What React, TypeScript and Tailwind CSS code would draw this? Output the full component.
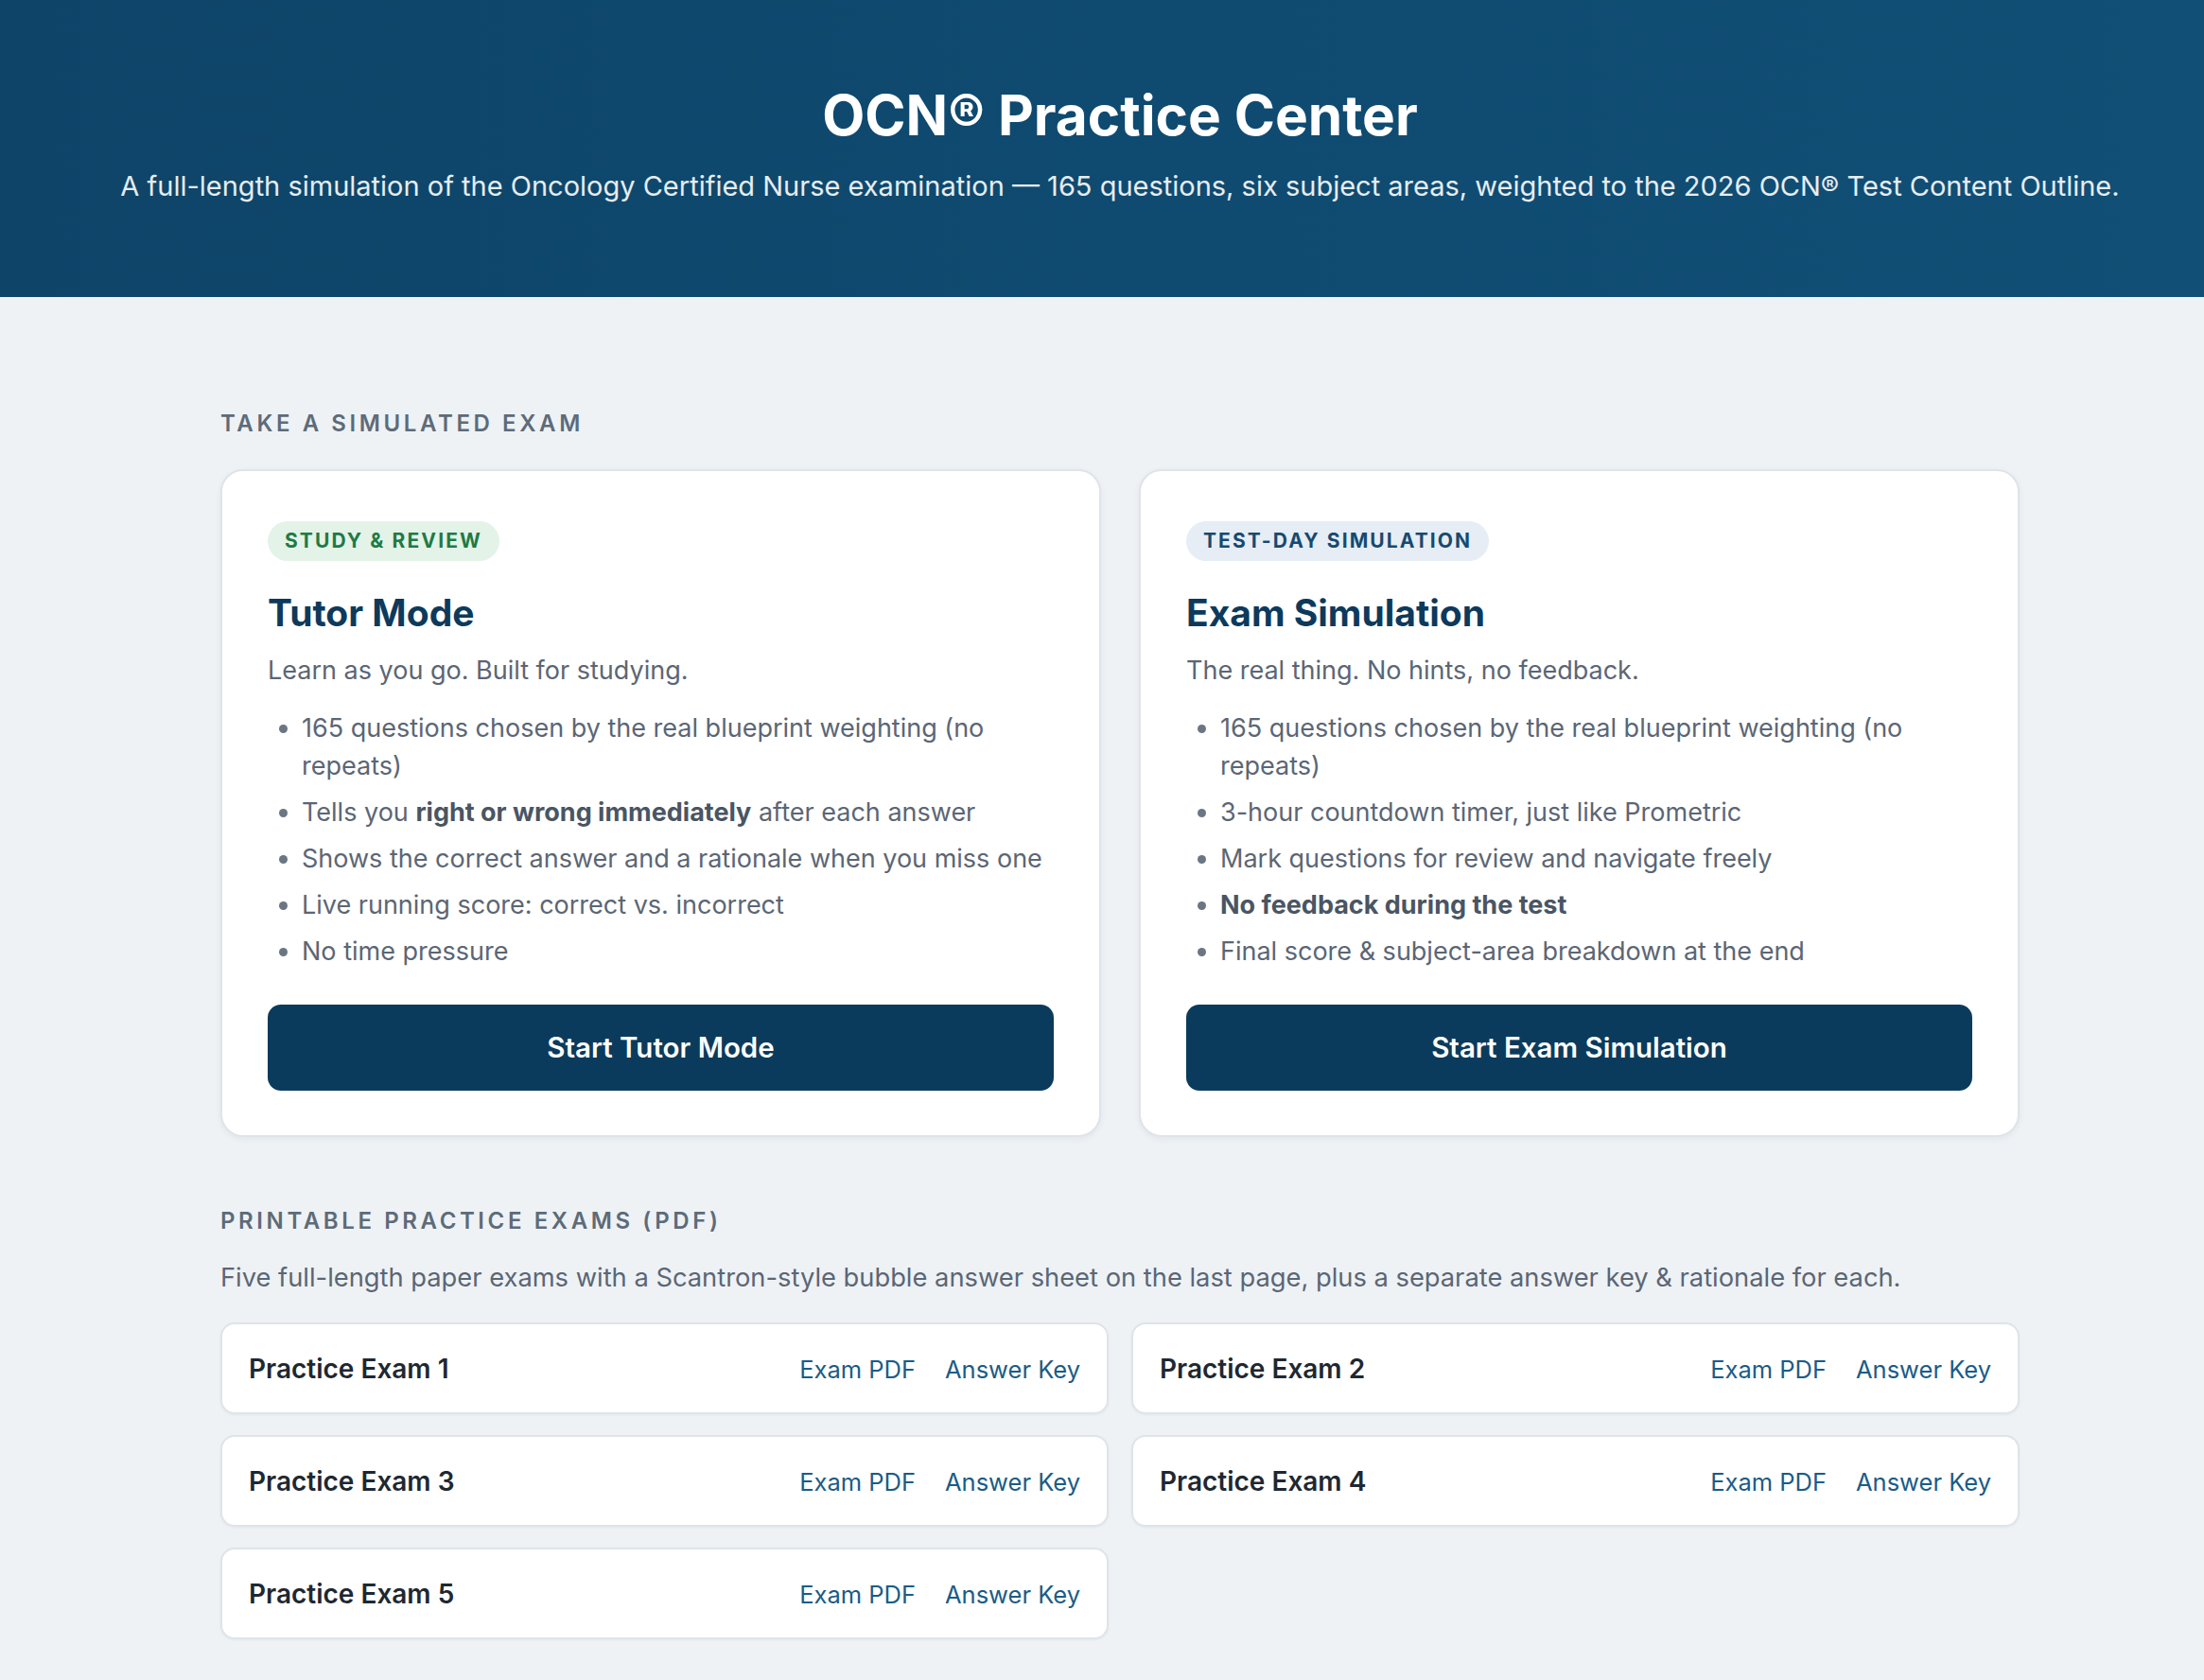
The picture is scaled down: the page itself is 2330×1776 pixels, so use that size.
const font = { fontFamily: "Inter, 'Noto Sans', sans-serif" };

function Badge({ children, tone }: { children: string; tone: "green" | "blue" }) {
  const cls =
    tone === "green"
      ? "bg-[#e3f3e8] text-[#1f7a45]"
      : "bg-[#e6edf5] text-[#164a70]";
  return (
    <span
      className={`inline-flex h-[42px] items-center rounded-full px-[18px] text-[21px] font-bold tracking-[0.1em] ${cls}`}
    >
      {children}
    </span>
  );
}

function ModeCard({
  badge,
  tone,
  title,
  desc,
  items,
  button,
}: {
  badge: string;
  tone: "green" | "blue";
  title: string;
  desc: string;
  items: React.ReactNode[];
  button: string;
}) {
  return (
    <div className="flex flex-col rounded-[24px] border-2 border-[#dfe4e9] bg-white px-[48px] pt-[53px] pb-[47px] shadow-[0_2px_6px_rgba(15,40,60,0.06)]">
      <div>
        <Badge tone={tone}>{badge}</Badge>
      </div>
      <h2 className="mt-[31px] text-[39px] leading-[47px] font-bold text-[#0d3a5c]">{title}</h2>
      <p className="mt-[18px] text-[27px] leading-[40px] text-[#5b6675]">{desc}</p>
      <ul className="mt-[21px] list-disc pl-[36px] text-[27px] leading-[40px] text-[#5b6675] marker:text-[#6b7683]">
        {items.map((it, i) => (
          <li key={i} className="mb-[9px] last:mb-0">
            {it}
          </li>
        ))}
      </ul>
      <button className="mt-[36px] h-[91px] w-full rounded-[14px] bg-[#0b3b5c] text-[29.5px] font-semibold text-white">
        {button}
      </button>
    </div>
  );
}

function ExamRow({ n }: { n: number }) {
  return (
    <div className="flex h-[97px] items-center justify-between rounded-[15px] border-2 border-[#dfe4e9] bg-white px-[28px] shadow-[0_1px_3px_rgba(15,40,60,0.05)]">
      <span className="text-[28px] font-semibold text-[#1e2832]">Practice Exam {n}</span>
      <div className="flex gap-[31px] pt-[3px] text-[25.5px] text-[#1a5c87]">
        <a href="#">Exam PDF</a>
        <a href="#">Answer Key</a>
      </div>
    </div>
  );
}

export default function App() {
  const B = "font-bold text-[#4a5563]";
  return (
    <div style={font} className="min-h-screen bg-[#eef2f5]">
      <header className="h-[314px] bg-gradient-to-r from-[#0e4468] via-[#0f4a70] to-[#114f76] pl-[38px]">
        <div className="flex h-full flex-col items-center justify-center pb-[9px] text-center">
          <h1 className="text-[58.5px] leading-[67px] font-bold text-white">OCN® Practice Center</h1>
          <p className="mt-[22px] text-[29px] leading-[40px] text-white/90">
            A full-length simulation of the Oncology Certified Nurse examination — 165 questions, six
            subject areas, weighted to the 2026 OCN® Test Content Outline.
          </p>
        </div>
      </header>

      <div className="pl-[38px]">
        <main className="mx-auto w-[1902px] pt-[120px] pb-[43px]">
          <h3 className="mb-[35px] text-[24px] leading-[27px] font-semibold tracking-[0.15em] text-[#5d6b79]">
            TAKE A SIMULATED EXAM
          </h3>
          <div className="grid grid-cols-2 gap-[40px]">
            <ModeCard
              badge="STUDY & REVIEW"
              tone="green"
              title="Tutor Mode"
              desc="Learn as you go. Built for studying."
              items={[
                "165 questions chosen by the real blueprint weighting (no repeats)",
                <>
                  Tells you <b className={B}>right or wrong immediately</b> after each answer
                </>,
                "Shows the correct answer and a rationale when you miss one",
                "Live running score: correct vs. incorrect",
                "No time pressure",
              ]}
              button="Start Tutor Mode"
            />
            <ModeCard
              badge="TEST-DAY SIMULATION"
              tone="blue"
              title="Exam Simulation"
              desc="The real thing. No hints, no feedback."
              items={[
                "165 questions chosen by the real blueprint weighting (no repeats)",
                "3-hour countdown timer, just like Prometric",
                "Mark questions for review and navigate freely",
                <b className={B}>No feedback during the test</b>,
                "Final score & subject-area breakdown at the end",
              ]}
              button="Start Exam Simulation"
            />
          </div>

          <h3 className="mt-[75px] text-[24px] leading-[27px] font-semibold tracking-[0.15em] text-[#5d6b79]">
            PRINTABLE PRACTICE EXAMS (PDF)
          </h3>
          <p className="mt-[27px] text-[27.3px] leading-[40px] text-[#5b6675]">
            Five full-length paper exams with a Scantron-style bubble answer sheet on the last page, plus a
            separate answer key &amp; rationale for each.
          </p>
          <div className="mt-[27px] grid grid-cols-2 gap-x-[24px] gap-y-[22px]">
            {[1, 2, 3, 4, 5].map((n) => (
              <ExamRow key={n} n={n} />
            ))}
          </div>
        </main>
      </div>
    </div>
  );
}
